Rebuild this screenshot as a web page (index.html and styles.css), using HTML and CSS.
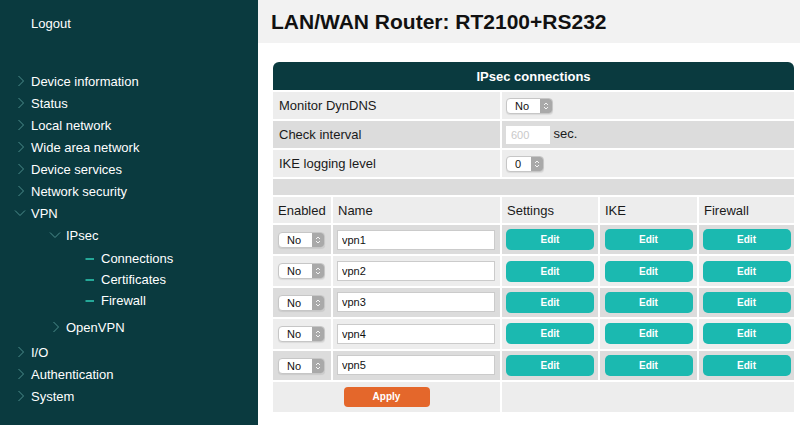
FILE: index.html
```
<!DOCTYPE html>
<html lang="en">
<head>
	<meta charset="UTF-8">
	<title>IPsec connections</title>
	<link rel="stylesheet" href="styles.css">
</head>
<body>
	<aside class="sidebar">
		<div class="logout">Logout</div>
		<ul class="menu">
			<li><span class="item"><svg class="ico" viewBox="0 0 17 12"><polyline points="4.5,1 9.5,6 4.5,11"/></svg>Device information</span></li>
			<li><span class="item"><svg class="ico" viewBox="0 0 17 12"><polyline points="4.5,1 9.5,6 4.5,11"/></svg>Status</span></li>
			<li><span class="item"><svg class="ico" viewBox="0 0 17 12"><polyline points="4.5,1 9.5,6 4.5,11"/></svg>Local network</span></li>
			<li><span class="item"><svg class="ico" viewBox="0 0 17 12"><polyline points="4.5,1 9.5,6 4.5,11"/></svg>Wide area network</span></li>
			<li><span class="item"><svg class="ico" viewBox="0 0 17 12"><polyline points="4.5,1 9.5,6 4.5,11"/></svg>Device services</span></li>
			<li><span class="item"><svg class="ico" viewBox="0 0 17 12"><polyline points="4.5,1 9.5,6 4.5,11"/></svg>Network security</span></li>
			<li>
				<span class="item"><svg class="ico" viewBox="0 0 17 12"><polyline points="1,3.5 6,8.5 11,3.5"/></svg>VPN</span>
				<ul class="sub">
					<li>
						<span class="item"><svg class="ico" viewBox="0 0 17 12"><polyline points="1,3.5 6,8.5 11,3.5"/></svg>IPsec</span>
						<ul class="leaf">
							<li><span class="item"><svg class="ico dash" viewBox="0 0 17 12"><line x1="1.5" y1="6" x2="10" y2="6"/></svg>Connections</span></li>
							<li><span class="item"><svg class="ico dash" viewBox="0 0 17 12"><line x1="1.5" y1="6" x2="10" y2="6"/></svg>Certificates</span></li>
							<li><span class="item"><svg class="ico dash" viewBox="0 0 17 12"><line x1="1.5" y1="6" x2="10" y2="6"/></svg>Firewall</span></li>
						</ul>
					</li>
					<li><span class="item"><svg class="ico" viewBox="0 0 17 12"><polyline points="4.5,1 9.5,6 4.5,11"/></svg>OpenVPN</span></li>
				</ul>
			</li>
			<li><span class="item"><svg class="ico" viewBox="0 0 17 12"><polyline points="4.5,1 9.5,6 4.5,11"/></svg>I/O</span></li>
			<li><span class="item"><svg class="ico" viewBox="0 0 17 12"><polyline points="4.5,1 9.5,6 4.5,11"/></svg>Authentication</span></li>
			<li><span class="item"><svg class="ico" viewBox="0 0 17 12"><polyline points="4.5,1 9.5,6 4.5,11"/></svg>System</span></li>
		</ul>
	</aside>

	<main class="main">
		<h1 class="topbar">LAN/WAN Router: RT2100+RS232</h1>

		<table class="conns">
			<colgroup>
				<col class="c-enabled">
				<col class="c-name">
				<col class="c-settings">
				<col class="c-ike">
				<col class="c-fw">
			</colgroup>
			<thead>
				<tr><th colspan="5" class="title">IPsec connections</th></tr>
			</thead>
			<tbody>
				<tr class="opt">
					<td colspan="2" class="label">Monitor DynDNS</td>
					<td colspan="3" class="value">
						<span class="pick"><select><option>No</option></select><span class="arrows"><svg viewBox="0 0 8 10"><polyline points="2,4 4,2 6,4"/><polyline points="2,6 4,8 6,6"/></svg></span></span>
					</td>
				</tr>
				<tr class="opt">
					<td colspan="2" class="label">Check interval</td>
					<td colspan="3" class="value"><input class="num" type="text" placeholder="600"> sec.</td>
				</tr>
				<tr class="opt">
					<td colspan="2" class="label">IKE logging level</td>
					<td colspan="3" class="value">
						<span class="pick"><select class="short"><option>0</option></select><span class="arrows"><svg viewBox="0 0 8 10"><polyline points="2,4 4,2 6,4"/><polyline points="2,6 4,8 6,6"/></svg></span></span>
					</td>
				</tr>
				<tr class="gap"><td colspan="5"></td></tr>
				<tr class="head">
					<td>Enabled</td>
					<td>Name</td>
					<td>Settings</td>
					<td>IKE</td>
					<td>Firewall</td>
				</tr>
				<tr class="conn">
					<td class="en"><span class="pick"><select><option>No</option></select><span class="arrows"><svg viewBox="0 0 8 10"><polyline points="2,4 4,2 6,4"/><polyline points="2,6 4,8 6,6"/></svg></span></span></td>
					<td class="nm"><input class="name" type="text" value="vpn1"></td>
					<td class="btn-cell"><button class="edit">Edit</button></td>
					<td class="btn-cell"><button class="edit">Edit</button></td>
					<td class="btn-cell"><button class="edit">Edit</button></td>
				</tr>
				<tr class="conn">
					<td class="en"><span class="pick"><select><option>No</option></select><span class="arrows"><svg viewBox="0 0 8 10"><polyline points="2,4 4,2 6,4"/><polyline points="2,6 4,8 6,6"/></svg></span></span></td>
					<td class="nm"><input class="name" type="text" value="vpn2"></td>
					<td class="btn-cell"><button class="edit">Edit</button></td>
					<td class="btn-cell"><button class="edit">Edit</button></td>
					<td class="btn-cell"><button class="edit">Edit</button></td>
				</tr>
				<tr class="conn">
					<td class="en"><span class="pick"><select><option>No</option></select><span class="arrows"><svg viewBox="0 0 8 10"><polyline points="2,4 4,2 6,4"/><polyline points="2,6 4,8 6,6"/></svg></span></span></td>
					<td class="nm"><input class="name" type="text" value="vpn3"></td>
					<td class="btn-cell"><button class="edit">Edit</button></td>
					<td class="btn-cell"><button class="edit">Edit</button></td>
					<td class="btn-cell"><button class="edit">Edit</button></td>
				</tr>
				<tr class="conn">
					<td class="en"><span class="pick"><select><option>No</option></select><span class="arrows"><svg viewBox="0 0 8 10"><polyline points="2,4 4,2 6,4"/><polyline points="2,6 4,8 6,6"/></svg></span></span></td>
					<td class="nm"><input class="name" type="text" value="vpn4"></td>
					<td class="btn-cell"><button class="edit">Edit</button></td>
					<td class="btn-cell"><button class="edit">Edit</button></td>
					<td class="btn-cell"><button class="edit">Edit</button></td>
				</tr>
				<tr class="conn">
					<td class="en"><span class="pick"><select><option>No</option></select><span class="arrows"><svg viewBox="0 0 8 10"><polyline points="2,4 4,2 6,4"/><polyline points="2,6 4,8 6,6"/></svg></span></span></td>
					<td class="nm"><input class="name" type="text" value="vpn5"></td>
					<td class="btn-cell"><button class="edit">Edit</button></td>
					<td class="btn-cell"><button class="edit">Edit</button></td>
					<td class="btn-cell"><button class="edit">Edit</button></td>
				</tr>
				<tr class="foot">
					<td colspan="2" class="btn-cell"><button class="apply">Apply</button></td>
					<td colspan="3"></td>
				</tr>
			</tbody>
		</table>
	</main>
</body>
</html>
```

FILE: styles.css
```
*{margin: 0;padding: 0;box-sizing: border-box;}
body{
	display: flex;
	height: 425px;
	overflow: hidden;
	background: #fff;
	font: 13px 'Liberation Sans', Arial, sans-serif;
	color: #1a1a1a;
}
ul{list-style: none;}

/* left menu */
.sidebar{
	width: 258px;
	flex: none;
	background: #0a3a3f;
	color: #fff;
}
.logout{
	padding: 13px 0 0 31px;
	line-height: 22px;
}
.menu{
	margin-top: 35px;
	padding-left: 14px;
}
.item{
	display: flex;
	align-items: center;
	height: 22px;
}
.ico{
	width: 17px;
	height: 12px;
	flex: none;
	fill: none;
	stroke: #4d8e8d;
	stroke-width: 1;
}
.ico.dash{
	stroke: #25a898;
	stroke-width: 2;
}
.sub{
	padding-left: 35px;
	margin-bottom: 3px;
}
.leaf{
	padding-left: 35px;
	margin: 2px 0 5px;
}
.leaf .item{
	height: 21px;
}

/* right side */
.main{
	flex: 1;
}
.topbar{
	height: 43px;
	background: #f2f2f2;
	padding-left: 13px;
	font-size: 21px;
	line-height: 43px;
	font-weight: bold;
	color: #111;
}
.conns{
	margin: 17px 0 0 13px;
	width: 525px;
	table-layout: fixed;
	border-collapse: separate;
	border-spacing: 2px;
}
.c-enabled{width: 58px;}
.c-name{width: 167px;}
.c-settings{width: 96px;}
.c-ike{width: 97px;}
.c-fw{width: 95px;}

.conns td{
	vertical-align: middle;
	white-space: nowrap;
}
.conns tbody tr:nth-child(odd) td{background: #ededed;}
.conns tbody tr:nth-child(even) td{background: #dcdcdc;}

.title{
	height: 28px;
	background: #0a3a3f;
	color: #fff;
	font-weight: bold;
	font-size: 13px;
	text-align: center;
	border-radius: 6px 6px 0 0;
}
.opt td{height: 27px;}
.label{padding-left: 6px;}
.value{padding-left: 4px;}
.gap td{height: 16px;}
.head td{
	height: 26px;
	padding-left: 5px;
}
.conn td{height: 29.4px;}
.en{padding-left: 5px;}
.nm{padding-left: 4px;}
.btn-cell{text-align: center;}
.foot td{height: 30px;}

/* mac style select */
.pick{
	display: inline-flex;
	height: 16px;
	border: 1px solid #c6c6c6;
	border-radius: 4px;
	background: #fff;
	overflow: hidden;
	vertical-align: middle;
	box-shadow: 0 1px 1px rgba(0,0,0,.08);
}
.pick select{
	appearance: none;
	-webkit-appearance: none;
	border: 0;
	outline: 0;
	background: transparent;
	width: 33px;
	padding-left: 8px;
	font: 11px 'Liberation Sans', Arial, sans-serif;
	color: #111;
}
.pick select.short{width: 24px;}
.arrows{
	width: 12px;
	background: #a9a9a9;
	display: flex;
	align-items: center;
	justify-content: center;
}
.arrows svg{
	width: 8px;
	height: 10px;
	fill: none;
	stroke: #f4f4f4;
	stroke-width: 1;
}

.num{
	width: 44px;
	height: 18px;
	border: 0;
	background: #fff;
	padding-left: 5px;
	font: 11px 'Liberation Sans', Arial, sans-serif;
	vertical-align: middle;
}
.num::placeholder{color: #c9c9c9;}

.name{
	width: 158px;
	height: 20px;
	border: 1px solid #cbcbcb;
	background: #fff;
	padding: 0 4px;
	font: 11px 'Liberation Sans', Arial, sans-serif;
	color: #111;
	vertical-align: middle;
}

.edit, .apply{
	border: 0;
	color: #fff;
	font: bold 10px 'Liberation Sans', Arial, sans-serif;
	vertical-align: middle;
}
.edit{
	width: 88px;
	height: 21px;
	border-radius: 5px;
	background: #1bb9b0;
}
.apply{
	width: 86px;
	height: 20px;
	border-radius: 4px;
	background: #e4672b;
}
```
